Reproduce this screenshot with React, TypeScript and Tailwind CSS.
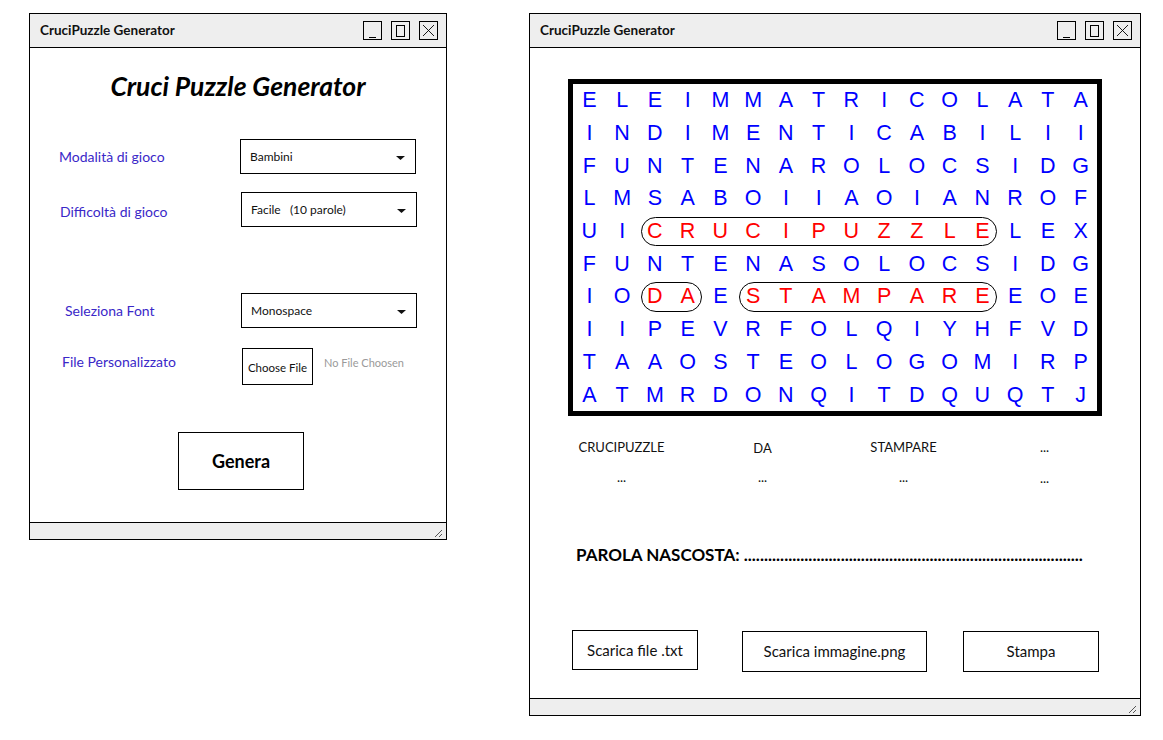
import React from 'react';

const ROWS = [
  'ELEIMMATRICOLATA',
  'INDIMENTICABILII',
  'FUNTENAROLOCSIDG',
  'LMSABOIIAOIANROF',
  'UICRUCIPUZZLELEX',
  'FUNTENASOLOCSIDG',
  'IODAESTAMPAREEOE',
  'IIPEVRFOLQIYHFVD',
  'TAAOSTEOLOGOMIRP',
  'ATMRDONQITDQUQTJ',
];

// found words: row, first col, last col
const FOUND = [
  { row: 4, from: 2, to: 12 },
  { row: 6, from: 2, to: 3 },
  { row: 6, from: 5, to: 12 },
];

const CELL_W = 32.75;
const CELL_H = 32.7;

const isRed = (r: number, c: number) => FOUND.some((f) => f.row === r && c >= f.from && c <= f.to);

const WinButtons: React.FC = () => (
  <div className="flex gap-[9px]">
    <div className="flex h-[19px] w-[19px] items-end justify-center border border-black pb-[1px]">
      <div className="h-px w-[7px] bg-black" />
    </div>
    <div className="flex h-[19px] w-[19px] items-center justify-center border border-black">
      <div className="h-[12px] w-[9px] border border-black" />
    </div>
    <div className="flex h-[19px] w-[19px] items-center justify-center border border-black">
      <svg width="13" height="13" viewBox="0 0 13 13">
        <path d="M1 1L12 12M12 1L1 12" stroke="#000" strokeWidth="0.9" />
      </svg>
    </div>
  </div>
);

const Window: React.FC<{ className: string; children: React.ReactNode }> = ({ className, children }) => (
  <div className={`flex flex-col border border-black bg-white ${className}`}>
    <div className="flex h-[34px] shrink-0 items-center justify-between border-b border-black bg-[#eeeeee] pl-[10px] pr-[8px]">
      <span className="text-[13.5px] font-bold text-[#111]">CruciPuzzle Generator</span>
      <WinButtons />
    </div>
    <div className="flex flex-1 flex-col">{children}</div>
    <div className="flex h-[17px] shrink-0 items-end justify-end border-t border-black bg-[#eeeeee] pb-[1px] pr-[3px]">
      <svg width="10" height="10" viewBox="0 0 10 10">
        <path d="M2 9L9 2M6 9L9 6" stroke="#555" strokeWidth="1" />
      </svg>
    </div>
  </div>
);

const Caret = () => (
  <svg width="9" height="4" viewBox="0 0 9 4">
    <path d="M0 0H9L4.5 4Z" fill="#111" />
  </svg>
);

const SelectBox: React.FC<{ value: string }> = ({ value }) => (
  <div className="flex h-[35px] w-[176px] items-center justify-between border border-black pl-[9px] pr-[10px] text-[12px] text-[#111]">
    <span className="whitespace-pre">{value}</span>
    <span className="pt-[3px]">
      <Caret />
    </span>
  </div>
);

const LeftWindow: React.FC = () => (
  <Window className="h-[527px] w-[418px]">
    <h1 className="mt-[23px] text-center text-[26.5px] leading-[30px] font-bold italic text-black">
      Cruci Puzzle Generator
    </h1>

    <div className="mt-[38px] flex items-center">
      <div className="w-[210px] pl-[29px] text-[14px] text-[#3a28c8]">Modalità di gioco</div>
      <SelectBox value="Bambini" />
    </div>

    <div className="mt-[18px] flex items-center">
      <div className="w-[211px] pl-[30px] pt-[4px] text-[14px] text-[#3a28c8]">Difficoltà di gioco</div>
      <SelectBox value="Facile   (10 parole)" />
    </div>

    <div className="mt-[66px] flex items-center">
      <div className="w-[211px] pl-[35px] text-[14px] text-[#3a28c8]">Seleziona Font</div>
      <SelectBox value="Monospace" />
    </div>

    <div className="mt-[20px] flex items-start">
      <div className="w-[212px] pl-[32px] pt-[3px] text-[14px] text-[#3a28c8]">File Personalizzato</div>
      <div className="flex h-[37px] w-[71px] items-center justify-center border border-black pt-[2px] text-[11.5px] text-[#111]">
        Choose File
      </div>
      <div className="ml-[11px] pt-[7px] text-[11px] text-[#9a9a9a]">No File Choosen</div>
    </div>

    <div className="mt-[47px] pl-[148px]">
      <button className="flex h-[58px] w-[126px] items-center justify-center border border-black text-[18px] font-bold text-black">
        Genera
      </button>
    </div>
  </Window>
);

const WordGrid: React.FC = () => (
  <div className="ml-[38px] mt-[31px] w-[534px] border-[5px] border-black">
    <div className="relative grid h-[327px] w-[524px] grid-cols-16 grid-rows-10 font-['Liberation_Sans',Arial,sans-serif] text-[21.5px]">
      {ROWS.map((row, r) =>
        row.split('').map((ch, c) => (
          <div
            key={`${r}-${c}`}
            className={`flex items-center justify-center ${isRed(r, c) ? 'text-[#ff0000]' : 'text-[#0000ff]'}`}
          >
            {ch}
          </div>
        ))
      )}
      {FOUND.map((f, i) => (
        <div
          key={i}
          className="absolute rounded-full border-[1.5px] border-black"
          style={{
            left: f.from * CELL_W + 2,
            width: (f.to - f.from + 1) * CELL_W - 4,
            top: f.row * CELL_H + 2,
            height: CELL_H - 3,
          }}
        />
      ))}
    </div>
  </div>
);

const RightWindow: React.FC = () => (
  <Window className="h-[703px] w-[612px]">
    <WordGrid />

    <div className="ml-[21px] mt-[22px] grid w-[564px] grid-cols-4 text-center text-[13px] leading-[18px] text-[#111]">
      <span>CRUCIPUZZLE</span>
      <span className="pt-[1px]">DA</span>
      <span>STAMPARE</span>
      <span>...</span>
      <span className="mt-[11px]">...</span>
      <span className="mt-[11px]">...</span>
      <span className="mt-[11px]">...</span>
      <span className="mt-[12px]">...</span>
    </div>

    <div className="ml-[46px] mt-[56px] whitespace-nowrap text-[17px] leading-[24px] font-bold text-black">
      PAROLA NASCOSTA: ....................................................................................
    </div>

    <div className="mt-[63px] flex items-start pl-[42px] text-[15px] text-[#111]">
      <button className="flex h-[40px] w-[126px] items-center justify-center border border-black">
        Scarica file .txt
      </button>
      <button className="ml-[44px] mt-[1px] flex h-[41px] w-[185px] items-center justify-center border border-black">
        Scarica immagine.png
      </button>
      <button className="ml-[36px] mt-[1px] flex h-[41px] w-[136px] items-center justify-center border border-black">
        Stampa
      </button>
    </div>
  </Window>
);

export default function App() {
  return (
    <div className="flex min-h-[740px] items-start gap-[82px] bg-white pl-[29px] pt-[13px] font-['Lato','Noto_Sans',sans-serif]">
      <LeftWindow />
      <RightWindow />
    </div>
  );
}
